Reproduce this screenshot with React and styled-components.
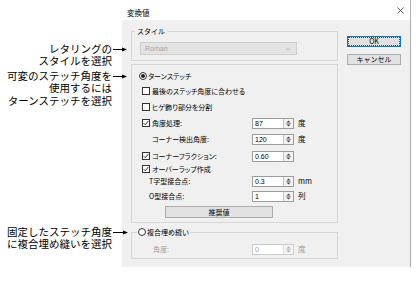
import React from 'react';
import styled, {createGlobalStyle} from 'styled-components';

const GlobalStyle = createGlobalStyle`
  html, body {
    margin: 0;
    padding: 0;
    background: #fff;
  }
  body {
    font-family: 'Noto Sans CJK JP', 'Noto Sans', sans-serif;
    color: #000;
  }
`;

const Page = styled.div`
  display: flex;
  width: 416px;
  height: 282px;
  overflow: hidden;
  background: #fff;
`;

/* callouts on the left */

const CalloutColumn = styled.div`
  position: relative;
  z-index: 2;
  width: 122px;
  flex-shrink: 0;
  display: flex;
  flex-direction: column;
  align-items: flex-start;
`;

const Callout = styled.div`
  display: flex;
  align-items: flex-start;
  width: 128px;
  margin-top: ${p => p.$top}px;
`;

const CalloutText = styled.div`
  width: 112px;
  flex-shrink: 0;
  text-align: right;
  font-size: 10.5px;
  line-height: 12.5px;
  white-space: nowrap;
`;

const ArrowSvg = styled.svg`
  display: block;
  flex-shrink: 0;
  margin-top: 4px;
`;

const Arrow = ({length = 15}) => (
  <ArrowSvg width={length} height="5" viewBox={`0 0 ${length} 5`}>
    <line x1="1" y1="2.5" x2={length - 4} y2="2.5" stroke="#000" strokeWidth="1" />
    <polygon points={`${length - 5},0.5 ${length},2.5 ${length - 5},4.5`} fill="#000" />
  </ArrowSvg>
);

/* dialog frame */

const Dialog = styled.div`
  width: 289px;
  height: 267px;
  flex-shrink: 0;
  box-sizing: border-box;
  border-right: 1px solid #ababab;
  display: flex;
  flex-direction: column;
`;

const TitleBar = styled.div`
  height: 20px;
  flex-shrink: 0;
  display: flex;
  align-items: flex-start;
  justify-content: space-between;
  padding: 0 6px 0 5px;
  background: #fff;
`;

const Title = styled.div`
  margin-top: 8px;
  font-size: 7.5px;
  line-height: 10px;
`;

const CloseSvg = styled.svg`
  display: block;
  margin-top: 7px;
`;

const Body = styled.div`
  flex: 1;
  display: flex;
  padding: 0 9px;
  background: #f0f0f0;
`;

const MainColumn = styled.div`
  width: 207px;
  flex-shrink: 0;
  padding-top: 11px;
  display: flex;
  flex-direction: column;
`;

const ButtonColumn = styled.div`
  width: 54px;
  margin-left: 9px;
  padding-top: 16px;
  display: flex;
  flex-direction: column;
  gap: 7px;
`;

const DialogButton = styled.div`
  box-sizing: border-box;
  display: flex;
  align-items: center;
  justify-content: center;
  border: 1px solid ${p => (p.$primary ? '#0078d7' : '#adadad')};
  outline: ${p => (p.$primary ? '1px dotted #4a4a4a' : 'none')};
  outline-offset: -2px;
  background: #e1e1e1;
  font-size: 7px;
  line-height: 9px;
  width: ${p => p.$width || 'auto'};
  height: ${p => p.$height || 11}px;
`;

/* group boxes */

const Group = styled.div`
  border: 1px solid #d7d7d7;
  margin-top: ${p => p.$mt || 0}px;
  padding: ${p => p.$pt || 0}px 0 ${p => p.$pb || 0}px;
`;

const Legend = styled.div`
  display: flex;
  align-items: center;
  gap: 1px;
  width: fit-content;
  height: 10px;
  margin: -6px 0 0 ${p => p.$ml}px;
  padding: 0 ${p => p.$px}px;
  background: #f0f0f0;
  font-size: 7px;
  line-height: 10px;
`;

const Select = styled.div`
  width: 157px;
  height: 13px;
  box-sizing: border-box;
  margin: 6px 0 0 8px;
  padding: 0 5px 0 4px;
  display: flex;
  align-items: center;
  justify-content: space-between;
  border: 1px solid #cfcfcf;
  background: #e3e3e3;
  color: #a3a3a3;
  font-family: 'Liberation Sans', sans-serif;
  font-size: 7px;
`;

const Row = styled.div`
  height: 12px;
  display: flex;
  align-items: center;
  margin-top: ${p => p.$mt || 0}px;
  padding-left: ${p => p.$indent || 0}px;
`;

const Label = styled.span`
  flex: 1;
  font-size: 7px;
  line-height: 10px;
  white-space: nowrap;
  font-feature-settings: 'palt';
  color: ${p => (p.$disabled ? '#a0a0a0' : '#000')};
  margin-left: ${p => p.$gap || 0}px;
`;

const Field = styled.div`
  width: 85px;
  flex-shrink: 0;
  display: flex;
  align-items: center;
`;

const SpinBox = styled.div`
  width: 42px;
  height: 11px;
  box-sizing: border-box;
  display: flex;
  border: 1px solid ${p => (p.$disabled ? '#cccccc' : '#9c9c9c')};
  background: #fff;
`;

const SpinValue = styled.span`
  flex: 1;
  padding-left: 2px;
  font-family: 'Liberation Sans', sans-serif;
  font-size: 7px;
  line-height: 9px;
  color: ${p => (p.$disabled ? '#a0a0a0' : '#000')};
`;

const SpinButtons = styled.div`
  width: 9px;
  display: flex;
  align-items: center;
  justify-content: center;
  border-left: 1px solid ${p => (p.$disabled ? '#dddddd' : '#c4c4c4')};
  background: #f3f3f3;
`;

const Unit = styled.span`
  margin-left: 4px;
  font-size: 7.5px;
  line-height: 10px;
  color: ${p => (p.$disabled ? '#a0a0a0' : '#000')};
`;

const Box = styled.span`
  width: 8px;
  height: 8px;
  box-sizing: border-box;
  flex-shrink: 0;
  display: flex;
  align-items: center;
  justify-content: center;
  border: 1px solid #333;
  background: #fff;
`;

const Circle = styled.span`
  width: 8px;
  height: 8px;
  box-sizing: border-box;
  flex-shrink: 0;
  display: flex;
  align-items: center;
  justify-content: center;
  border: 1px solid #333;
  border-radius: 50%;
  background: #fff;

  &::after {
    content: '';
    display: ${p => (p.$on ? 'block' : 'none')};
    width: 4px;
    height: 4px;
    border-radius: 50%;
    background: #222;
  }
`;

const Checkbox = ({checked}) => (
  <Box>
    {checked && (
      <svg width="6" height="6" viewBox="0 0 6 6">
        <path d="M0.6 3.1 L2.3 4.8 L5.4 0.9" fill="none" stroke="#222" strokeWidth="0.9" />
      </svg>
    )}
  </Box>
);

const SpinInput = ({value, unit, disabled}) => (
  <Field>
    <SpinBox $disabled={disabled}>
      <SpinValue $disabled={disabled}>{value}</SpinValue>
      <SpinButtons $disabled={disabled}>
        <svg width="5" height="7" viewBox="0 0 5 7">
          <polygon points="2.5,0.5 4.5,2.5 0.5,2.5" fill={disabled ? '#aaa' : '#444'} />
          <line x1="0.3" y1="3.5" x2="4.7" y2="3.5" stroke={disabled ? '#bbb' : '#666'} strokeWidth="0.6" />
          <polygon points="0.5,4.5 4.5,4.5 2.5,6.5" fill={disabled ? '#aaa' : '#444'} />
        </svg>
      </SpinButtons>
    </SpinBox>
    {unit && <Unit $disabled={disabled}>{unit}</Unit>}
  </Field>
);

const CALLOUTS = [
  {top: 42.75, lines: ['レタリングの', 'スタイルを選択']},
  {top: 2, lines: ['可変のステッチ角度を', '使用するには', 'ターンステッチを選択']},
  {top: 118.5, lines: ['固定したステッチ角度', 'に複合埋め縫いを選択'], arrow: 16}
];

export default function App() {
  return (
    <Page>
      <GlobalStyle />
      <CalloutColumn>
        {CALLOUTS.map(callout => (
          <Callout key={callout.lines[0]} $top={callout.top}>
            <CalloutText>
              {callout.lines.map(line => (
                <div key={line}>{line}</div>
              ))}
            </CalloutText>
            <Arrow length={callout.arrow || 15} />
          </Callout>
        ))}
      </CalloutColumn>

      <Dialog>
        <TitleBar>
          <Title>変換値</Title>
          <CloseSvg width="7" height="7" viewBox="0 0 7 7">
            <path d="M0.5 0.5 L6.5 6.5 M6.5 0.5 L0.5 6.5" stroke="#333" strokeWidth="0.8" />
          </CloseSvg>
        </TitleBar>

        <Body>
          <MainColumn>
            <Group $pb={5}>
              <Legend $ml={3} $px={2}>スタイル</Legend>
              <Select>
                <span>Roman</span>
                <svg width="6" height="4" viewBox="0 0 6 4">
                  <path d="M0.5 0.8 L3 3.2 L5.5 0.8" fill="none" stroke="#a8a8a8" strokeWidth="0.8" />
                </svg>
              </Select>
            </Group>

            <Group $mt={3} $pt={5} $pb={4}>
              <Row $indent={7}>
                <Circle $on />
                <Label $gap={1}>ターンステッチ</Label>
              </Row>
              <Row $mt={3} $indent={10}>
                <Checkbox />
                <Label $gap={2}>最後のステッチ角度に合わせる</Label>
              </Row>
              <Row $mt={4} $indent={10}>
                <Checkbox />
                <Label $gap={2}>ヒゲ飾り部分を分割</Label>
              </Row>
              <Row $mt={4} $indent={10}>
                <Checkbox checked />
                <Label $gap={2}>角度処理:</Label>
                <SpinInput value="87" unit="度" />
              </Row>
              <Row $mt={4} $indent={20}>
                <Label>コーナー検出角度:</Label>
                <SpinInput value="120" unit="度" />
              </Row>
              <Row $mt={5} $indent={10}>
                <Checkbox checked />
                <Label $gap={2}>コーナーフラクション:</Label>
                <SpinInput value="0.60" />
              </Row>
              <Row $mt={1} $indent={10}>
                <Checkbox checked />
                <Label $gap={2}>オーバーラップ作成</Label>
              </Row>
              <Row $indent={17}>
                <Label>T字型接合点:</Label>
                <SpinInput value="0.3" unit="mm" />
              </Row>
              <Row $mt={3} $indent={17}>
                <Label>O型接合点:</Label>
                <SpinInput value="1" unit="列" />
              </Row>
              <Row $mt={4} $indent={33}>
                <DialogButton $width="108px" $height={12}>推奨値</DialogButton>
              </Row>
            </Group>

            <Group $mt={9} $pb={3}>
              <Legend $ml={5} $px={1}>
                <Circle />
                <span>複合埋め縫い</span>
              </Legend>
              <Row $mt={6} $indent={21}>
                <Label $disabled>角度:</Label>
                <SpinInput value="0" unit="度" disabled />
              </Row>
            </Group>
          </MainColumn>

          <ButtonColumn>
            <DialogButton $primary>OK</DialogButton>
            <DialogButton>キャンセル</DialogButton>
          </ButtonColumn>
        </Body>
      </Dialog>
    </Page>
  );
}
